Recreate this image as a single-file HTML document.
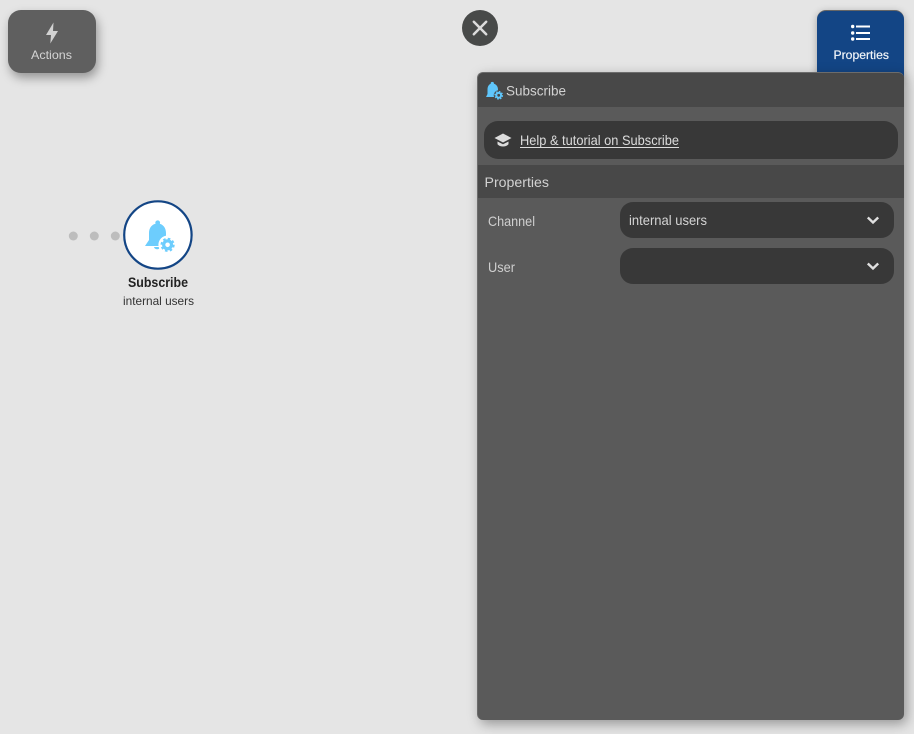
<!DOCTYPE html>
<html><head><meta charset="utf-8"><style>
html,body{margin:0;padding:0;width:914px;height:734px;overflow:hidden;background:#e5e5e5}
div{position:absolute;box-sizing:border-box}
svg{position:absolute;left:0;top:0}
text{font-family:"Liberation Sans",sans-serif}
</style></head><body>
<div style="left:8px;top:10px;width:88px;height:63px;border-radius:13px;background:#5f5f5f;box-shadow:2px 5px 10px rgba(0,0,0,.35)"></div>
<div style="left:462px;top:10px;width:36px;height:36px;border-radius:50%;background:#484a49"></div>
<div style="left:817px;top:10px;width:87px;height:70px;border-radius:9px 9px 0 0;background:#134585;border-top:1px solid #666;box-shadow:0 2px 8px rgba(0,0,0,.3)"></div>
<div style="left:477px;top:72px;width:427px;height:648px;border-radius:6px;background:#5a5a5a;box-shadow:3px 4px 12px rgba(0,0,0,.35);overflow:hidden;border:1px solid #6c6c6c;border-width:1px 0 0 1px">
  <div style="left:0;top:0;width:427px;height:34px;background:#484848"></div>
  <div style="left:6px;top:48px;width:414px;height:38px;border-radius:14px;background:#383838"></div>
  <div style="left:0;top:92px;width:427px;height:33px;background:#484848"></div>
  <div style="left:142px;top:129px;width:274px;height:36px;border-radius:13px;background:#383838"></div>
  <div style="left:142px;top:175px;width:274px;height:36px;border-radius:13px;background:#383838"></div>
</div>
<svg width="914" height="734" viewBox="0 0 914 734">
  <circle cx="73.300" cy="236" r="4.500" fill="#bdbdbd"/><circle cx="94.300" cy="236" r="4.500" fill="#bdbdbd"/><circle cx="115.300" cy="236" r="4.500" fill="#bdbdbd"/>
  <circle cx="157.900" cy="235" r="33.700" fill="#fff" stroke="#134585" stroke-width="2.200"/>
  <path d="M53.500 22.500L46 35H51L50.300 43.500L58 31H53Z" fill="#d2d2d2"/>
  <text x="31" y="59" font-size="12" fill="#d4d4d4" textLength="41" lengthAdjust="spacingAndGlyphs">Actions</text>
  <path d="M473.800 21.800L486.200 34.200M486.200 21.800L473.800 34.200" stroke="#dcdcdc" stroke-width="2.500" stroke-linecap="round"/>
  <path d="M856 26.500H870M856 33H870M856 39H870" stroke="#fff" stroke-width="2"/>
  <circle cx="852.700" cy="26.500" r="1.700" fill="#fff"/><circle cx="852.700" cy="33" r="1.700" fill="#fff"/><circle cx="852.700" cy="39" r="1.700" fill="#fff"/>
  <text x="833.500" y="59" font-size="12" fill="#f0f4f8" stroke="#f0f4f8" stroke-width=".2" textLength="55.500" lengthAdjust="spacingAndGlyphs">Properties</text>

  <g fill="#6dcdfd">
    <circle cx="157.700" cy="222.800" r="2.400"/>
    <path d="M157.600 223.500C163 223.500 166 228 166 233V240L170 246H145L149 240V233C149 228 152 223.500 157.600 223.500Z"/>
    <path d="M154 247H160C160 250 154.500 250 154 247Z"/>
    <circle cx="167.600" cy="244.800" r="9.200" fill="#fff"/>
    <circle cx="167.600" cy="244.800" r="3.900" fill="none" stroke="#6dcdfd" stroke-width="3.200"/>
    <circle cx="167.600" cy="244.800" r="6.200" fill="none" stroke="#6dcdfd" stroke-width="1.800" stroke-dasharray="2.600 2.270"/>
  </g>
  <text x="128" y="287" font-size="14" font-weight="bold" fill="#222" textLength="60" lengthAdjust="spacingAndGlyphs">Subscribe</text>
  <text x="123" y="305" font-size="12" fill="#333" textLength="71" lengthAdjust="spacingAndGlyphs">internal users</text>

  <g fill="#5fc6fb">
    <circle cx="492.300" cy="83.500" r="1.600"/>
    <path d="M492.300 83.500C496 83.500 498 86.500 498 89.500V93L500.500 97H486L487.500 94V89.500C487.500 86.500 489 83.500 492.300 83.500Z"/>
    <circle cx="498.700" cy="95.300" r="5" fill="#484848"/>
    <circle cx="498.700" cy="95.300" r="2.400" fill="none" stroke="#5fc6fb" stroke-width="2"/>
    <circle cx="498.700" cy="95.300" r="3.800" fill="none" stroke="#5fc6fb" stroke-width="1.200" stroke-dasharray="1.600 1.380"/>
  </g>
  <text x="506" y="95.500" font-size="14" fill="#d2d2d2" textLength="60" lengthAdjust="spacingAndGlyphs">Subscribe</text>

  <path d="M503 133.500L511.500 138L503 142.500L494.500 138Z" fill="#dcdcdc"/>
  <path d="M497.500 141.500L503 144.300L508.500 141.500V144.300C506 147.300 500 147.300 497.500 144.300Z" fill="#dcdcdc"/>
  <text x="520" y="145" font-size="14" fill="#dcdcdc" textLength="159" lengthAdjust="spacingAndGlyphs">Help &amp; tutorial on Subscribe</text>
  <rect x="520" y="147" width="159" height="1" fill="#dcdcdc"/>

  <text x="484.500" y="187" font-size="14" fill="#d2d2d2" textLength="64.500" lengthAdjust="spacingAndGlyphs">Properties</text>
  <text x="488" y="226" font-size="14" fill="#cfcfcf" textLength="47" lengthAdjust="spacingAndGlyphs">Channel</text>
  <text x="488" y="272" font-size="14" fill="#cfcfcf" textLength="27" lengthAdjust="spacingAndGlyphs">User</text>
  <text x="629" y="225" font-size="14" fill="#d4d4d4" textLength="78" lengthAdjust="spacingAndGlyphs">internal users</text>
  <path d="M867.800 217.500L873 222.500L878.200 217.500M867.800 263.500L873 268.500L878.200 263.500" fill="none" stroke="#e0e0e0" stroke-width="2.400"/>
</svg>
</body></html>
